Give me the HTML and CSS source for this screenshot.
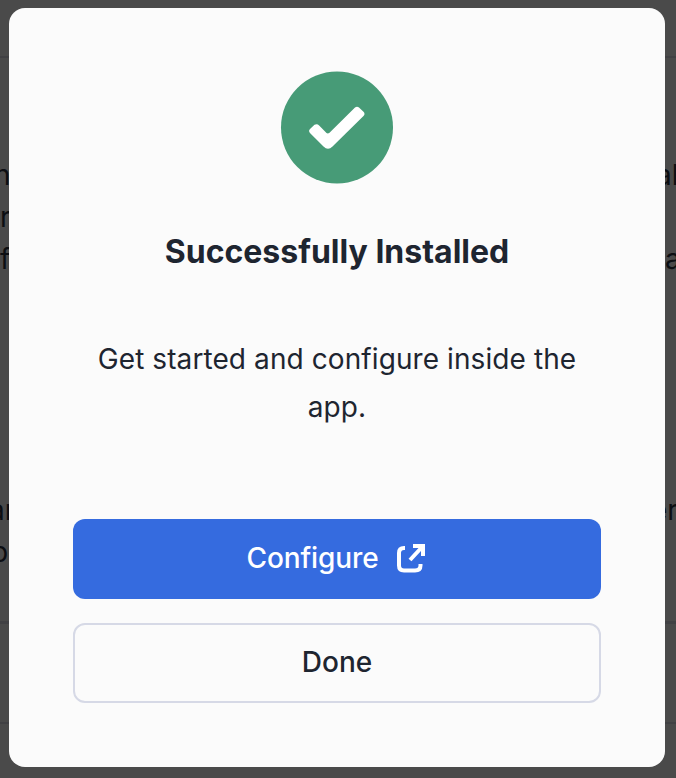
FILE: index.html
```html
<!DOCTYPE html>
<html lang="en">
<head>
<meta charset="utf-8">
<title>Successfully Installed</title>
<link rel="stylesheet" href="styles.css">
</head>
<body>
<div class="backdrop">
  <span class="rule rule-a"></span><span class="rule rule-b"></span><span class="rule rule-c"></span>
  <span class="bit left r1">n</span><span class="bit left r2">r</span><span class="bit left r3">f</span><span class="bit left r4">ar</span><span class="bit left r5">p</span>
  <span class="bit right r1">al</span><span class="bit right r3">a</span><span class="bit right r4">er</span>
</div>
<main class="dialog">
  <svg class="check" viewBox="0 0 112 112" aria-hidden="true"><circle cx="56" cy="56.500" r="56" fill="#479b77"/><path transform="translate(-1 3.500)" d="M30.500 54L34.500 50.300Q37 48.800 39.400 51.200L46.500 58.600Q48 59.500 49.500 58.200L75 33Q77 31.300 79 33L83.500 37.200Q85.500 39.400 83.500 41.600L52.500 72Q48 76.500 43.500 72L30.200 58.700Q27.800 56.300 30.500 54Z" fill="#fff"/></svg>
  <h1>Successfully Installed</h1>
  <p>Get started and configure inside the app.</p>
  <button class="btn primary">Configure
    <svg class="ext" viewBox="0 0 30 30" fill="none" stroke="#fff" stroke-width="4" aria-hidden="true"><path d="M10 4H9Q4 4 4 9V21.500Q4 26.500 9 26.500H20Q25.500 26.500 25.500 21.500V20M18 2H28V12M28 2L15 16" transform="translate(-1 1)"/></svg>
  </button>
  <button class="btn secondary">Done</button>
</main>
</body>
</html>
```
FILE: styles.css
```css
* { box-sizing: border-box; }
body { margin: 0; height: 778px; overflow: hidden; background: #4a4a4a; font-family: Inter, sans-serif; color: #1e2530; padding: 8px 11px 11px 9px; }
.backdrop { position: absolute; inset: 0; overflow: hidden; font-size: 28px; line-height: 42px; color: #0c0e12; }
.rule { position: absolute; left: 0; right: 0; height: 2px; background: #414144; }
.rule-a { top: 56px; } .rule-b { top: 621px; height: 3px; } .rule-c { top: 722px; }
.bit { position: absolute; }
.left.r1 { top: 154px; left: -6px; }
.left.r2 { top: 196px; left: 0; }
.left.r3 { top: 238px; left: 0; }
.left.r4 { top: 489px; left: -11px; }
.left.r5 { top: 531px; left: -9px; }
.right.r1 { top: 154px; left: 656px; }
.right.r3 { top: 238px; left: 665px; }
.right.r4 { top: 489px; left: 651px; }
.dialog { position: relative; height: 759px; padding: 63px 64px 0; background: #fbfbfb; border-radius: 16px; display: flex; flex-direction: column; align-items: center; }
.check { width: 112px; height: 112px; flex: none; overflow: visible; }
h1 { margin: 45px 0 0; font-size: 32px; line-height: 48px; font-weight: 700; white-space: nowrap; }
p { margin: 59px 0 0; font-size: 28px; line-height: 48px; text-align: center; letter-spacing: 0.09px; }
.btn { width: 528px; height: 80px; border-radius: 12px; font: 500 28px/40px Inter, sans-serif; display: flex; align-items: center; justify-content: center; gap: 17px; flex: none; padding: 0 0 2px; }
.primary { margin-top: 88px; border: 0; background: #356bdf; color: #fff; letter-spacing: -0.1px; padding-right: 2px; }
.secondary { margin-top: 24px; border: 2px solid #d6d9e6; background: #fbfbfb; color: #1e2530; }
.ext { width: 30px; height: 30px; }
```
